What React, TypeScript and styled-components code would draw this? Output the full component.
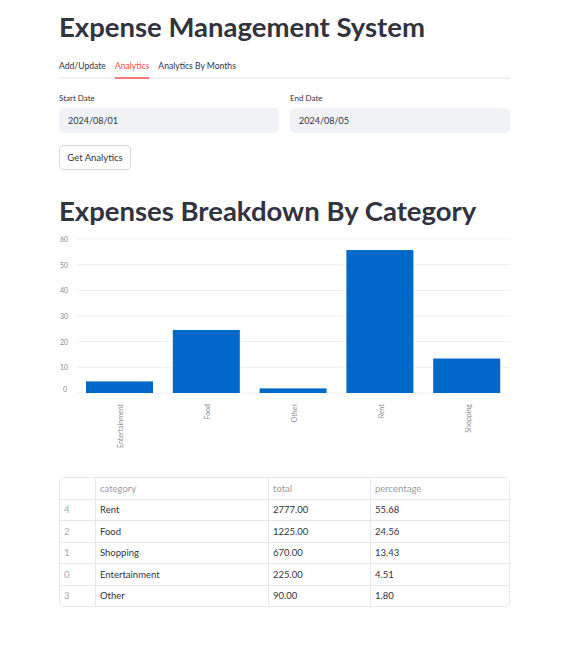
import React from 'react'
import styled, { createGlobalStyle } from 'styled-components'

const GlobalStyle = createGlobalStyle`
  body {
    margin: 0;
    background: #ffffff;
    font-family: Lato, "Noto Sans", sans-serif;
    color: #31333f;
  }
`

const Page = styled.main`
  width: 451px;
  padding: 0 0 40px 59px;
`

const Title = styled.h1`
  margin: 0;
  padding-top: 9px;
  font-size: 27.5px;
  line-height: 36px;
  font-weight: 700;
  color: #31333f;
`

const TabBar = styled.div`
  display: flex;
  gap: 9px;
  margin-top: 15px;
  border-bottom: 2px solid #f0f2f6;
`

const Tab = styled.div<{ $active?: boolean }>`
  font-size: 8.6px;
  line-height: 12px;
  padding-bottom: 7px;
  color: ${(p) => (p.$active ? '#ff4b4b' : '#31333f')};
  box-shadow: ${(p) => (p.$active ? 'inset 0 -2px 0 #f47a7a' : 'none')};
  margin-bottom: -2px;
`

const DateRow = styled.div`
  display: grid;
  grid-template-columns: 1fr 1fr;
  gap: 11px;
  margin-top: 13px;
`

const Field = styled.div`
  display: flex;
  flex-direction: column;
`

const Label = styled.label`
  font-size: 8px;
  line-height: 12px;
  margin-bottom: 4px;
`

const Input = styled.div`
  height: 25px;
  background: #f0f2f6;
  border-radius: 5px;
  display: flex;
  align-items: center;
  padding-left: 9px;
  font-size: 9px;
`

const Button = styled.button`
  margin-top: 12px;
  height: 25px;
  width: 72px;
  background: #ffffff;
  border: 1px solid #d5d7dd;
  border-radius: 5px;
  font-family: inherit;
  font-size: 9.5px;
  color: #31333f;
  padding: 0;
`

const Heading = styled.h2`
  margin: 23px 0 0;
  font-size: 27.5px;
  line-height: 36px;
  font-weight: 700;
  color: #31333f;
`

const Chart = styled.svg`
  display: block;
  margin-top: 4px;
  width: 452px;
  height: 235px;
`

const Table = styled.table`
  margin-top: 9px;
  width: 451px;
  border-collapse: separate;
  border-spacing: 0;
  border: 1px solid #e6e8ec;
  border-radius: 5px;
  font-size: 9.5px;
  color: #31333f;

  th, td {
    height: 20.5px;
    padding: 0 0 0 4px;
    text-align: left;
    font-weight: 400;
    border-right: 1px solid #e6e8ec;
    border-bottom: 1px solid #e6e8ec;
  }
  th:last-child, td:last-child {
    border-right: none;
  }
  tr:last-child td {
    border-bottom: none;
  }
  th {
    color: #9a9ca4;
  }
  td:first-child {
    color: #a8aab0;
  }
`

const data = [
  { name: 'Entertainment', value: 4.51 },
  { name: 'Food', value: 24.56 },
  { name: 'Other', value: 1.8 },
  { name: 'Rent', value: 55.68 },
  { name: 'Shopping', value: 13.43 },
]

const rows = [
  ['4', 'Rent', '2777.00', '55.68'],
  ['2', 'Food', '1225.00', '24.56'],
  ['1', 'Shopping', '670.00', '13.43'],
  ['0', 'Entertainment', '225.00', '4.51'],
  ['3', 'Other', '90.00', '1.80'],
]

const zeroY = 160
const scale = 2.567
const left = 18
const band = 86.8

function BarChart() {
  return (
    <Chart viewBox="0 0 452 235">
      {[0, 10, 20, 30, 40, 50, 60].map((t) => {
        const y = zeroY - t * scale
        return (
          <g key={t}>
            <line x1={left} x2={452} y1={y} y2={y} stroke="#eef0f3" strokeWidth="1" />
            <text x={t < 10 ? 4 : 1} y={t === 0 ? y - 1 : y + 3} fontSize="7" fill="#888a92" fontFamily="Lato, sans-serif">
              {t}
            </text>
          </g>
        )
      })}
      {data.map((d, i) => {
        const x = left + i * band + 10
        const h = d.value * scale
        const cx = left + i * band + band / 2
        return (
          <g key={d.name}>
            <rect x={x - 1} y={zeroY - h} width={67} height={h} fill="#0068c9" />
            <text
              transform={`translate(${cx + 3}, 171) rotate(-90)`}
              textAnchor="end"
              fontSize="7"
              fill="#888a92"
              fontFamily="Lato, sans-serif"
            >
              {d.name}
            </text>
          </g>
        )
      })}
    </Chart>
  )
}

export default function App() {
  return (
    <>
      <GlobalStyle />
      <Page>
        <Title>Expense Management System</Title>
        <TabBar>
          <Tab>Add/Update</Tab>
          <Tab $active>Analytics</Tab>
          <Tab>Analytics By Months</Tab>
        </TabBar>
        <DateRow>
          <Field>
            <Label>Start Date</Label>
            <Input>2024/08/01</Input>
          </Field>
          <Field>
            <Label>End Date</Label>
            <Input>2024/08/05</Input>
          </Field>
        </DateRow>
        <Button>Get Analytics</Button>
        <Heading>Expenses Breakdown By Category</Heading>
        <BarChart />
        <Table>
          <thead>
            <tr>
              <th style={{ width: 31 }}></th>
              <th style={{ width: 168 }}>category</th>
              <th style={{ width: 97 }}>total</th>
              <th>percentage</th>
            </tr>
          </thead>
          <tbody>
            {rows.map((r) => (
              <tr key={r[0]}>
                {r.map((c, i) => (
                  <td key={i}>{c}</td>
                ))}
              </tr>
            ))}
          </tbody>
        </Table>
      </Page>
    </>
  )
}
